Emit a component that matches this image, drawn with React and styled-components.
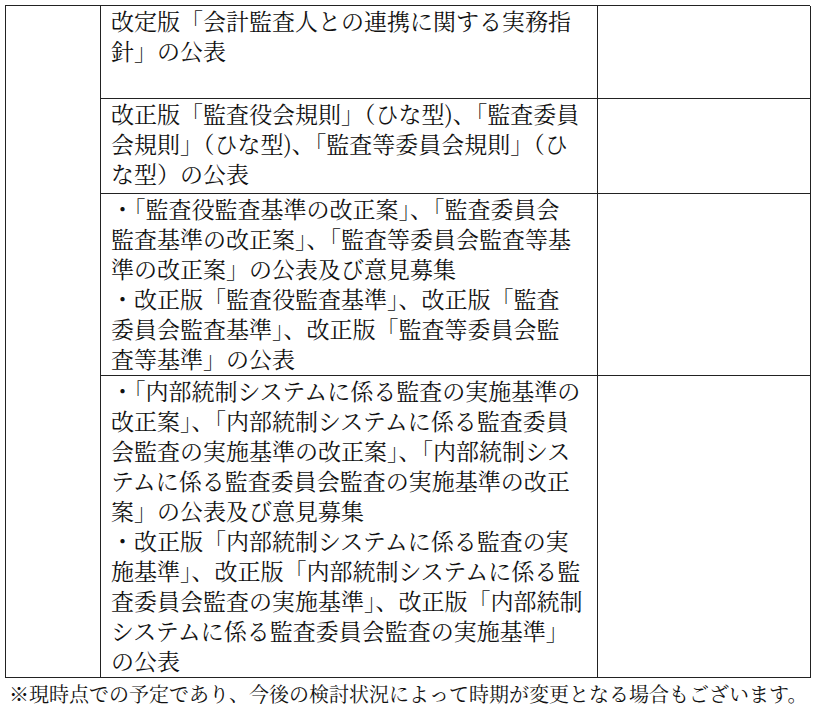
import React from 'react'
import styled, { createGlobalStyle } from 'styled-components'

const GlobalStyle = createGlobalStyle`
    body {
        margin: 0;
        background: #fff;
        color: #111;
        font-family: "Noto Serif CJK JP", "Liberation Serif", "Noto Sans CJK JP", serif;
    }
`

const rows = [
    {
        min: 93,
        lines: ['改定版「会計監査人との連携に関する実務指', '針」の公表'],
    },
    {
        min: 95,
        lines: [
            '改正版「監査役会規則」（ひな型)、「監査委員',
            '会規則」（ひな型)、「監査等委員会規則」（ひ',
            'な型）の公表',
        ],
    },
    {
        lines: [
            '・「監査役監査基準の改正案」、「監査委員会',
            '監査基準の改正案」、「監査等委員会監査等基',
            '準の改正案」の公表及び意見募集',
            '・改正版「監査役監査基準」、改正版「監査',
            '委員会監査基準」、改正版「監査等委員会監',
            '査等基準」の公表',
        ],
    },
    {
        lines: [
            '・「内部統制システムに係る監査の実施基準の',
            '改正案」、「内部統制システムに係る監査委員',
            '会監査の実施基準の改正案」、「内部統制シス',
            'テムに係る監査委員会監査の実施基準の改正',
            '案」の公表及び意見募集',
            '・改正版「内部統制システムに係る監査の実',
            '施基準」、改正版「内部統制システムに係る監',
            '査委員会監査の実施基準」、改正版「内部統制',
            'システムに係る監査委員会監査の実施基準」',
            'の公表',
        ],
    },
]

function App() {
    return (
        <Page>
            <GlobalStyle />
            <Sheet>
                <SideCell />
                {rows.map((row, i) => (
                    <React.Fragment key={i}>
                        <TextCell $min={row.min}>
                            {row.lines.map((l, j) => <Line key={j}>{l}</Line>)}
                        </TextCell>
                        <Cell />
                    </React.Fragment>
                ))}
            </Sheet>
            <Note>※現時点での予定であり、今後の検討状況によって時期が変更となる場合もございます。</Note>
        </Page>
    )
}

const Page = styled.div`
    padding: 5px 0 0 5px;
    width: 817px;
    box-sizing: border-box;
`

const Sheet = styled.div`
    display: grid;
    grid-template-columns: 95px 497px 213px;
    width: 805px;
    border-top: 1px solid #222;
    border-left: 1px solid #222;
    box-sizing: border-box;
`

const Cell = styled.div`
    border-right: 1px solid #222;
    border-bottom: 1px solid #222;
    min-height: ${p => (p.$min ? p.$min + 'px' : 'auto')};
    box-sizing: border-box;
`

const SideCell = styled(Cell)`
    grid-row: 1 / span 4;
`

const TextCell = styled(Cell)`
    padding: 0 0 1px 10px;
    font-size: 23px;
    line-height: 30px;
`

const Line = styled.div`
    white-space: nowrap;
`

const Note = styled.div`
    margin-top: 3px;
    font-size: 20px;
    line-height: 26px;
    white-space: nowrap;
    padding-left: 4px;
`

export default App
